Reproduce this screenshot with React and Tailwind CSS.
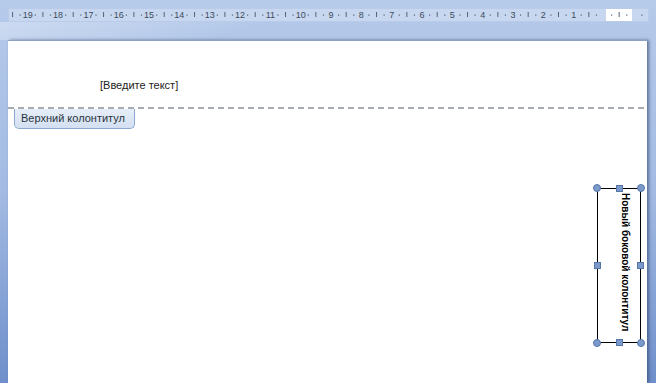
import React from 'react';

const CM = 30.33;
const ZERO = 596; // zero position inside the ruler (604 on screen)

function Ruler() {
  const marks = [];
  for (let n = 19; n >= 1; n--) {
    const x = ZERO - n * CM;
    marks.push(
      <text key={'n' + n} x={x} y={10} textAnchor="middle" fontSize="9" fill="#3d4a5c" fontFamily="Liberation Sans, Arial, sans-serif">
        {n}
      </text>
    );
  }
  const dots = [];
  const ticks = [];
  for (let q = -78; q <= 5; q++) {
    const x = ZERO + q * (CM / 4);
    if (x < 2 || x > 640) continue;
    if (q % 4 === 0) continue;
    if (Math.abs(q % 2) === 1) dots.push(<rect key={'d' + q} x={x - 0.6} y={6.5} width={1.2} height={1.2} fill="#56637a" />);
    else ticks.push(<rect key={'t' + q} x={x - 0.5} y={4} width={1} height={5} fill="#56637a" />);
  }
  return (
    <div className="ml-[8px] w-[641px] h-[14px] bg-[#c6d7ef] border border-[#b9cbe8]">
      <svg width="641" height="14" className="block -mt-px -ml-px">
        <rect x={598} y={1} width={26} height={12} fill="#ffffff" />
        {ticks}
        {dots}
        {marks}
      </svg>
    </div>
  );
}

function Handle({ round, className }) {
  return (
    <div
      className={
        'absolute bg-[#7b9acb] border border-[#5676aa] ' +
        (round ? 'w-[8px] h-[8px] rounded-full ' : 'w-[7px] h-[7px] ') +
        className
      }
    />
  );
}

export default function App() {
  return (
    <div className="w-[656px] h-[383px] overflow-hidden flex flex-col pt-[8px] bg-gradient-to-b from-[#b6caea] via-[#a3bbe3] to-[#6f8fcb] font-['Liberation_Sans',Arial,sans-serif]">
      <Ruler />
      <div className="h-[18px] bg-[linear-gradient(160deg,rgba(214,226,244,0.7)_0px,rgba(214,226,244,0)_90px)]" />
      <div className="ml-[8px] w-[639px] flex-1 bg-white relative border-t border-[#8ea3c4] shadow-[2px_0_3px_rgba(40,60,100,0.6)]">
        <div className="h-[66px] flex items-end pb-[14px] pl-[92px]">
          <span className="text-[11px] text-[#222]">[Введите текст]</span>
        </div>
        <div className="h-[2px] mr-[2px] bg-[repeating-linear-gradient(90deg,#a7abb2_0px,#a7abb2_6px,transparent_6px,transparent_10px)]" />
        <div className="ml-[6px] w-[121px] h-[20px] bg-gradient-to-b from-[#e6eef8] to-[#d3e0f2] border border-t-0 border-[#8ea9d1] rounded-b-[5px] flex items-center pl-[6px]">
          <span className="text-[11px] text-[#2a3440]">Верхний колонтитул</span>
        </div>

        <div className="absolute left-[589px] top-[147px] w-[44px] h-[155px] border border-black flex justify-end pr-[9px] pt-[4px]">
          <span className="[writing-mode:vertical-rl] text-[10px] font-bold text-black leading-[12px]">
            Новый боковой колонтитул
          </span>
          <Handle round className="-left-[5px] -top-[5px]" />
          <Handle round className="-right-[5px] -top-[5px]" />
          <Handle round className="-left-[5px] -bottom-[5px]" />
          <Handle round className="-right-[5px] -bottom-[5px]" />
          <Handle className="left-[18px] -top-[4px]" />
          <Handle className="left-[18px] -bottom-[4px]" />
          <Handle className="-left-[4px] top-[73px]" />
          <Handle className="-right-[4px] top-[73px]" />
        </div>
      </div>
    </div>
  );
}
